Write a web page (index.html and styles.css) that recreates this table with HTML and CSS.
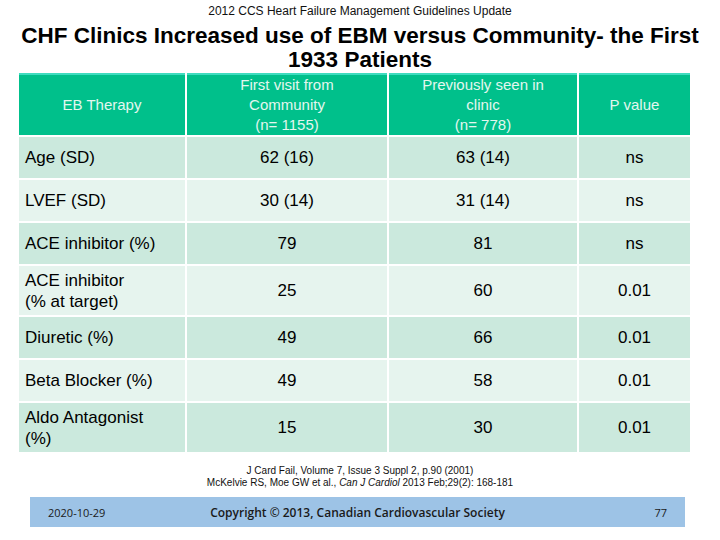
FILE: index.html
```html
<!DOCTYPE html>
<html>
<head>
<meta charset="utf-8">
<link rel="stylesheet" href="styles.css">
</head>
<body>
<div class="slide">
  <div class="subhead">2012 CCS Heart Failure Management Guidelines Update</div>
  <h1 class="title">CHF Clinics Increased use of EBM versus Community- the First 1933 Patients</h1>
  <table class="data">
    <thead>
      <tr class="head">
        <th class="c1">EB Therapy</th>
        <th class="c2">First visit from<br>Community<br>(n= 1155)</th>
        <th class="c3">Previously seen in<br>clinic<br>(n= 778)</th>
        <th class="c4">P value</th>
      </tr>
    </thead>
    <tbody>
      <tr class="odd"><td class="lbl">Age (SD)</td><td>62 (16)</td><td>63 (14)</td><td>ns</td></tr>
      <tr class="even"><td class="lbl">LVEF (SD)</td><td>30 (14)</td><td>31 (14)</td><td>ns</td></tr>
      <tr class="odd"><td class="lbl">ACE inhibitor (%)</td><td>79</td><td>81</td><td>ns</td></tr>
      <tr class="even tall"><td class="lbl">ACE inhibitor<br>(% at target)</td><td>25</td><td>60</td><td>0.01</td></tr>
      <tr class="odd"><td class="lbl">Diuretic (%)</td><td>49</td><td>66</td><td>0.01</td></tr>
      <tr class="even"><td class="lbl">Beta Blocker (%)</td><td>49</td><td>58</td><td>0.01</td></tr>
      <tr class="odd tall"><td class="lbl">Aldo Antagonist<br>(%)</td><td>15</td><td>30</td><td>0.01</td></tr>
    </tbody>
  </table>
  <div class="refs">
    <div>J Card Fail, Volume 7, Issue 3 Suppl 2, p.90 (2001)</div>
    <div>McKelvie RS, Moe GW et al., <i>Can J Cardiol</i> 2013 Feb;29(2): 168-181</div>
  </div>
  <div class="footer">
    <span class="date">2020-10-29</span>
    <span class="copy">Copyright © 2013, Canadian Cardiovascular Society</span>
    <span class="page">77</span>
  </div>
</div>
</body>
</html>
```

FILE: styles.css
```css
html, body {
  margin: 0;
  padding: 0;
  background: #ffffff;
}
.slide {
  width: 720px;
  height: 540px;
  font-family: "Liberation Sans", Arial, sans-serif;
  color: #000;
  display: flex;
  flex-direction: column;
  align-items: center;
}
.subhead {
  font-size: 12px;
  line-height: 14px;
  margin-top: 4px;
  color: #111;
}
.title {
  margin: 6px 0 0 0;
  font-size: 22.5px;
  line-height: 23.5px;
  font-weight: bold;
  text-align: center;
  width: 700px;
}
.data {
  align-self: flex-start;
  margin-top: 0;
  margin-left: 17px;
  border-collapse: separate;
  border-spacing: 2px;
}
.data th, .data td {
  padding: 0;
  text-align: center;
  vertical-align: middle;
}
.head th {
  background: #00c08b;
  border-top: 2px solid #3fdcbf;
  color: #e3f7ef;
  font-weight: normal;
  font-size: 15px;
  line-height: 20px;
  height: 60px;
}
.c1 { width: 166px; }
.c2 { width: 200px; }
.c3 { width: 188px; }
.c4 { width: 111px; }
.data td {
  font-size: 17px;
  line-height: 21px;
  height: 41px;
}
.data tr.tall td {
  height: 49px;
}
.data td.lbl {
  text-align: left;
  padding-left: 6px;
}
.odd td { background: #cbe9dd; }
.even td { background: #e6f4ee; }
.refs {
  margin-top: 11px;
  font-size: 10px;
  line-height: 12px;
  text-align: center;
  color: #111;
}
.footer {
  margin-top: 8px;
  width: 655px;
  height: 30px;
  margin-left: -5px;
  background: #9dc3e6;
  display: flex;
  align-items: center;
  justify-content: space-between;
  padding: 0 18px;
  box-sizing: border-box;
  color: #1a1a1a;
}
.date {
  font-size: 11px;
  font-family: "Open Sans", sans-serif;
  width: 100px;
}
.copy {
  font-family: "Open Sans", sans-serif;
  font-weight: 600;
  font-size: 12px;
}
.page {
  font-family: "Open Sans", sans-serif;
  font-size: 11px;
  width: 100px;
  text-align: right;
}
```
